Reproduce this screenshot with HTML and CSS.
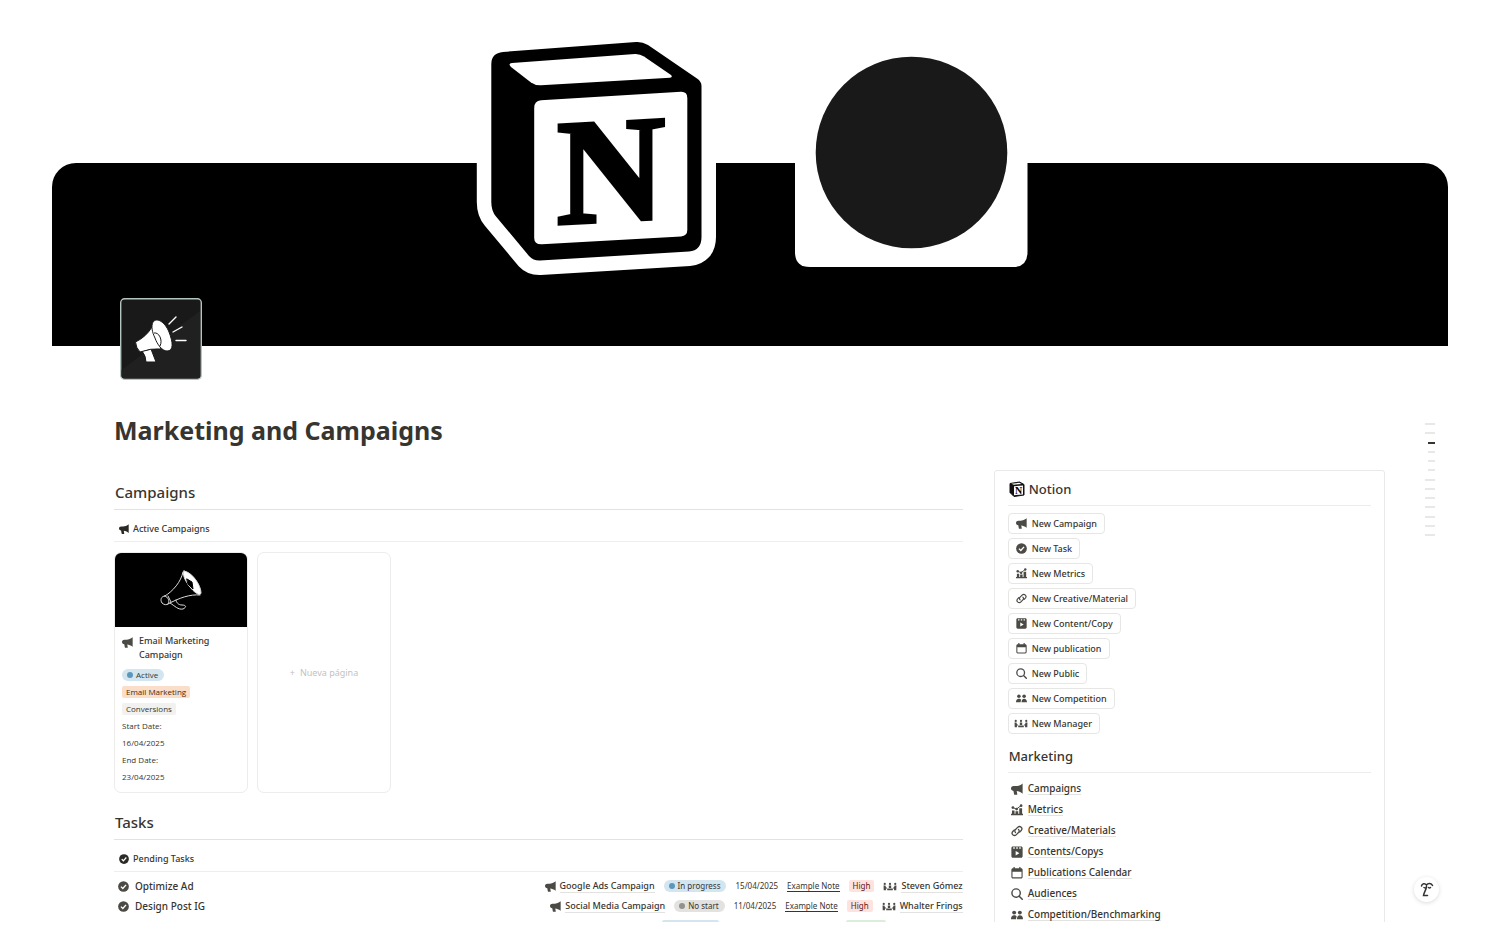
FILE: index.html
```html
<!DOCTYPE html>
<html lang="en">
<head>
    <meta charset="UTF-8">
    <meta name="viewport" content="width=device-width, initial-scale=1.0">
    <title>Marketing and Campaigns</title>
    <link rel="stylesheet" href="styles.css">
</head>
<body>
    <!-- Shared icons -->
    <svg class="icon-defs" aria-hidden="true">
        <symbol id="i-horn" viewBox="0 0 16 16">
            <path d="M15.500.5v13.700C12.600 12 10 11 7.600 10.800l.8 4.200c0 .5-.2.8-.7.8H5c-.5 0-.7-.2-.8-.6l-.9-4.700C1.200 10 0 9 0 7.200c0-1.800 1.200-3.200 3.500-3.200h3C9.600 3.900 12.600 2.900 15.500.5z"/>
        </symbol>
        <symbol id="i-check" viewBox="0 0 16 16">
            <circle cx="8" cy="8" r="7.800"/>
            <path d="M4.300 8.200l2.700 2.700 4.700-5.300" fill="none" stroke="#fff" stroke-width="2"/>
        </symbol>
        <symbol id="i-metrics" viewBox="0 0 16 16">
            <path d="M0 13h16v2H0zM1.300 8.500h3.400v5H1.300zM6 9.500h3.600V13.500H6zM11 5.500h3.800v8H11z"/>
            <path d="M2.500 4.800l4.800 2L13.500 2" fill="none" stroke="currentColor" stroke-width="1.300"/>
            <circle cx="2.500" cy="4.800" r="1.800"/><circle cx="7.500" cy="6.800" r="1.800"/><circle cx="13.500" cy="2.200" r="1.800"/>
        </symbol>
        <symbol id="i-link" viewBox="0 0 16 16">
            <g fill="none" stroke="currentColor" stroke-width="1.700" stroke-linecap="round">
                <path d="M6 10c-1.300-1.200-1.200-2.700 0-3.900l2.800-2.900c1.300-1.300 3.500-1.400 4.800-.2 1.300 1.300 1.200 3.100 0 4.400l-2 2"/>
                <path d="M10 6c1.300 1.200 1.200 2.700 0 3.900l-2.800 2.900c-1.300 1.300-3.500 1.400-4.800.2-1.300-1.300-1.200-3.100 0-4.400l2-2"/>
            </g>
        </symbol>
        <symbol id="i-video" viewBox="0 0 16 16">
            <path d="M.5 2.500c0-1.200.8-2 2-2h11c1.200 0 2 .8 2 2v11c0 1.200-.8 2-2 2h-11c-1.200 0-2-.8-2-2z"/>
            <path d="M3 1.800h2v2H3zM7 1.800h2v2H7zM11 1.800h2v2h-2zM6.200 6.500l5 3-5 3z" fill="#fff"/>
        </symbol>
        <symbol id="i-calendar" viewBox="0 0 16 16">
            <path d="M3.300 0H5v1.700h6V0h1.700v1.700h.8c1.100 0 2 .8 2 2v9.500c0 1.100-.9 2-2 2h-11c-1.100 0-2-.9-2-2V3.700c0-1.200.9-2 2-2h.8zM2 6.300v6.600c0 .5.300.8.8.8h10.400c.5 0 .8-.3.8-.8V6.300z" fill-rule="evenodd"/>
        </symbol>
        <symbol id="i-search" viewBox="0 0 16 16">
            <circle cx="6.800" cy="6.800" r="5.600" fill="none" stroke="currentColor" stroke-width="1.900"/>
            <path d="M11 11l4 4" stroke="currentColor" stroke-width="2" stroke-linecap="round"/>
        </symbol>
        <symbol id="i-people" viewBox="0 0 16 16">
            <circle cx="4.200" cy="4.800" r="2.600"/><circle cx="11.800" cy="4.800" r="2.600"/>
            <path d="M0 13.500c0-3.200 1.600-5.300 4.200-5.300 1.600 0 2.700.6 3.400 1.700C7 10.800 6.800 12 6.800 13.500zM8 13.500c0-3.200 1.400-5.300 3.800-5.300C14.400 8.200 16 10.300 16 13.500z"/>
        </symbol>
        <symbol id="i-team" viewBox="0 0 20 14">
            <circle cx="2.500" cy="3.300" r="1.600"/><circle cx="10" cy="3.300" r="1.600"/><circle cx="17.500" cy="3.300" r="1.600"/>
            <path d="M.8 5.600h2.700l.8 3h1.400V10H4.200v2.500H1zM19.200 5.600h-2.700l-.8 3h-1.400V10h1.500v2.500H19zM8.300 5.600h3.400v3.700H8.300zM6 10h8v2.500H6z"/>
        </symbol>
    </svg>

    <div class="page">
        <header class="cover">
            <svg class="cover-art" viewBox="476 27 552 250" role="img" aria-label="Notion logo">
                <!-- Cube -->
                <path d="M491.300 64Q491.300 53 503 52L636 42Q642 41.500 648 45L697 78.500Q701.500 81.500 701.500 86V237Q701.500 250.500 689 251.500L540 260.500Q533.500 260.800 529 256L496 216.500Q491.300 211 491.300 202Z" stroke="#fff" stroke-width="29" stroke-linejoin="round" fill="#fff"/>
                <path d="M491.300 64Q491.300 53 503 52L636 42Q642 41.500 648 45L697 78.500Q701.500 81.500 701.500 86V237Q701.500 250.500 689 251.500L540 260.500Q533.500 260.800 529 256L496 216.500Q491.300 211 491.300 202Z"/>
                <path d="M511 67Q507.500 63.500 512 63L635 54Q640 53.800 644 56.500L671 75Q673 77.300 670 77.700L541 85.300Q535 85.500 531 82.500Z" fill="#fff"/>
                <path d="M534.200 108Q534.200 100.800 541 100.300L681 91.700Q687.300 91.500 687.300 98V230Q687.300 236 681 236.400L542 244.300Q534.200 244.600 534.200 238Z" fill="#fff"/>
                <g transform="translate(611 221) skewY(-3)">
                    <text class="cube-letter" text-anchor="middle">N</text>
                </g>
                <!-- Badge -->
                <path d="M795 130H1027.500V252Q1027.500 267 1013 267H810Q795 267 795 252Z" fill="#fff"/>
                <circle cx="911.500" cy="152.500" r="95.800" fill="#191919"/>
            </svg>
            <svg class="page-icon" viewBox="0 0 82 82" role="img" aria-label="Megaphone">
                <rect x=".7" y=".7" width="80.600" height="80.600" rx="4" fill="#191919" stroke="#b4c4bf" stroke-width="1.400"/>
                <path d="M1.500 72L80 13V77.500Q80 80.500 77 80.500H4.500Q1.500 80.500 1.500 77.500Z" fill="#202020"/>
                <g fill="#fff" stroke="#191919">
                    <path d="M22 53L31 51L36 64L26 64Q26 58 22 53Z"/>
                    <path d="M15.500 44Q26 39 32 29L41 51Q31 50 20 54Q16 50 15.500 44Z"/>
                    <path d="M33 24C37 19 45 24 49 34C53 44 54 53 47 53C42 53 37 46 35 40C32 34 31 28 33 24Z"/>
                    <path d="M34 35C39 34 43 42 40 48" fill="none"/>
                </g>
                <path d="M49 26l7-7M53 34l9-5M56 42.500h10" stroke="#fff" stroke-width="1.400" stroke-linecap="round"/>
            </svg>
        </header>

        <h1 class="page-title">Marketing and Campaigns</h1>

        <div class="columns">
            <main class="main-col">
                <section class="campaigns">
                    <h2 class="section-title">Campaigns</h2>
                    <div class="view-tab"><svg class="icon"><use href="#i-horn"/></svg>Active Campaigns</div>
                    <div class="gallery">
                        <article class="card">
                            <div class="card-cover">
                                <svg class="card-art" viewBox="0 0 44 42" fill="none" stroke="#ddd" stroke-linecap="round">
                                    <path d="M24 3C22 13 14 22 6 27M41 26C31 25 20 29 9 35"/>
                                    <path d="M6 27C2 27 1 31 3 34C5 36 8 36 9 35C11 32 9 28 6 27ZM9 27L12 33"/>
                                    <path d="M25 2C33 3 42 16 42 24C41 28 35 23 31 18C26 12 23 5 25 2Z" fill="#fff"/>
                                    <path d="M28 10L33 13L34 20L29 15Z" fill="#000" stroke="#000"/>
                                    <path d="M11 34C16 37 19 41 24 40C28 38 27 36 23 36C19 36 17 33 17 31"/>
                                </svg>
                            </div>
                            <div class="card-body">
                                <h3 class="card-title"><svg class="icon"><use href="#i-horn"/></svg>Email Marketing Campaign</h3>
                                <div class="prop"><span class="status status-blue">Active</span></div>
                                <div class="prop"><span class="tag tag-orange">Email Marketing</span></div>
                                <div class="prop"><span class="tag tag-gray">Conversions</span></div>
                                <div class="prop">Start Date:</div>
                                <div class="prop prop-date">16/04/2025</div>
                                <div class="prop">End Date:</div>
                                <div class="prop prop-date">23/04/2025</div>
                            </div>
                        </article>
                        <button class="card card-new" type="button"><span class="plus">+</span>Nueva página</button>
                    </div>
                </section>

                <section class="tasks">
                    <h2 class="section-title">Tasks</h2>
                    <div class="view-tab"><svg class="icon"><use href="#i-check"/></svg>Pending Tasks</div>
                    <ul class="task-list">
                        <li class="task">
                            <span class="task-name"><svg class="icon"><use href="#i-check"/></svg>Optimize Ad</span>
                            <a class="relation" href="#"><svg class="icon"><use href="#i-horn"/></svg><span class="ref">Google Ads Campaign</span></a>
                            <span class="status status-blue">In progress</span>
                            <span class="task-date">15/04/2025</span>
                            <a class="note" href="#">Example Note</a>
                            <span class="tag tag-red">High</span>
                            <a class="relation" href="#"><svg class="icon icon-wide"><use href="#i-team"/></svg><span class="ref">Steven Gómez</span></a>
                        </li>
                        <li class="task">
                            <span class="task-name"><svg class="icon"><use href="#i-check"/></svg>Design Post IG</span>
                            <a class="relation" href="#"><svg class="icon"><use href="#i-horn"/></svg><span class="ref">Social Media Campaign</span></a>
                            <span class="status status-gray">No start</span>
                            <span class="task-date">11/04/2025</span>
                            <a class="note" href="#">Example Note</a>
                            <span class="tag tag-red">High</span>
                            <a class="relation" href="#"><svg class="icon icon-wide"><use href="#i-team"/></svg><span class="ref">Whalter Frings</span></a>
                        </li>
                        <!-- Next row, cut by the page edge -->
                        <li class="task task-cut">
                            <span class="pill-edge pill-blue"></span>
                            <span class="pill-edge pill-green"></span>
                        </li>
                    </ul>
                </section>
            </main>

            <aside class="side-col">
                <h2 class="side-title">
                    <svg class="notion-icon" viewBox="0 0 16 16">
                        <path d="M1 2.500L10.500 1L15 3.500V14L5 15.500L1 11.500Z" fill="#111" stroke="#111" stroke-linejoin="round"/>
                        <path d="M2.500 2.700L10.200 1.800L12.500 3L4.800 3.700ZM5 5.200L14 4.500V13.400L5 14.200Z" fill="#fff"/>
                        <text class="notion-letter" x="6" y="13">N</text>
                    </svg>
                    Notion
                </h2>
                <div class="actions">
                    <button class="action" type="button"><svg class="icon"><use href="#i-horn"/></svg>New Campaign</button>
                    <button class="action" type="button"><svg class="icon"><use href="#i-check"/></svg>New Task</button>
                    <button class="action" type="button"><svg class="icon"><use href="#i-metrics"/></svg>New Metrics</button>
                    <button class="action" type="button"><svg class="icon"><use href="#i-link"/></svg>New Creative/Material</button>
                    <button class="action" type="button"><svg class="icon"><use href="#i-video"/></svg>New Content/Copy</button>
                    <button class="action" type="button"><svg class="icon"><use href="#i-calendar"/></svg>New publication</button>
                    <button class="action" type="button"><svg class="icon"><use href="#i-search"/></svg>New Public</button>
                    <button class="action" type="button"><svg class="icon"><use href="#i-people"/></svg>New Competition</button>
                    <button class="action action-wide" type="button"><svg class="icon icon-wide"><use href="#i-team"/></svg>New Manager</button>
                </div>
                <h2 class="side-title">Marketing</h2>
                <nav class="links">
                    <a class="link" href="#"><svg class="icon"><use href="#i-horn"/></svg><span class="ref">Campaigns</span></a>
                    <a class="link" href="#"><svg class="icon"><use href="#i-metrics"/></svg><span class="ref">Metrics</span></a>
                    <a class="link" href="#"><svg class="icon"><use href="#i-link"/></svg><span class="ref">Creative/Materials</span></a>
                    <a class="link" href="#"><svg class="icon"><use href="#i-video"/></svg><span class="ref">Contents/Copys</span></a>
                    <a class="link" href="#"><svg class="icon"><use href="#i-calendar"/></svg><span class="ref">Publications Calendar</span></a>
                    <a class="link" href="#"><svg class="icon"><use href="#i-search"/></svg><span class="ref">Audiences</span></a>
                    <a class="link" href="#"><svg class="icon"><use href="#i-people"/></svg><span class="ref">Competition/Benchmarking</span></a>
                </nav>
            </aside>
        </div>

        <!-- Table of contents marks -->
        <div class="toc">
            <i></i><i></i><i class="sub current"></i><i class="sub"></i><i class="sub"></i><i class="sub"></i>
            <i></i><i></i><i></i><i></i><i></i><i></i><i></i>
        </div>

        <button class="ai-btn" type="button" aria-label="Assistant">
            <svg viewBox="0 0 14 16" fill="none" stroke="#333" stroke-width="1.500" stroke-linecap="round">
                <path d="M1.500 4C2 1.500 5 1 6.500 3C8 1 11.500 1 12.500 3.500M4 5.500Q5.500 6.500 6.500 5.500M8.500 5.500Q9.500 6.500 10.500 5.500M6.500 4C6.500 8 4 10 3.500 13.500H7.500"/>
            </svg>
        </button>
    </div>
</body>
</html>
```
FILE: styles.css
```css
* {
    box-sizing: border-box;
}
body {
    margin: 0;
    background: #fff;
    color: #37352f;
    font-family: "Noto Sans", "Open Sans", sans-serif;
    font-size: 9px;
    line-height: 16px;
}
a {
    color: inherit;
    text-decoration: none;
}
button {
    font: inherit;
    color: inherit;
    background: #fff;
    cursor: pointer;
}
h1, h2, h3, ul {
    margin: 0;
    padding: 0;
}
.icon-defs {
    display: none;
}
.icon {
    width: 11px;
    height: 11px;
    flex: none;
    color: #4b4a45;
    fill: currentColor;
}
.icon-wide {
    width: 14px;
}

/* Page frame */
.page {
    position: relative;
    height: calc(100vh - 15px);
    padding: 163px 52px 0;
    overflow: hidden;
}
.cover {
    position: relative;
    height: 183px;
    background: #000;
    border-radius: 24px 24px 0 0;
}
.cover-art {
    position: absolute;
    left: 424px;
    bottom: 69px;
    width: 552px;
    height: 250px;
}
.cube-letter {
    font-family: "Liberation Serif", serif;
    font-weight: bold;
    font-size: 150px;
    stroke: #000;
    stroke-width: 4px;
}
.page-icon {
    position: absolute;
    left: 68px;
    bottom: -34px;
    width: 82px;
    height: 82px;
}
.page-title {
    margin: 64px 62px 0;
    font-size: 25px;
    line-height: 40px;
    font-weight: 700;
}
.columns {
    display: grid;
    grid-template-columns: 848fr 391fr;
    gap: 31px;
    margin: 20px 63px 0 62px;
    align-items: start;
}

/* Main column */
.section-title {
    padding: 11px 0 6px 1px;
    border-bottom: 1px solid #e3e2e0;
    font-size: 15px;
    line-height: 22px;
    font-weight: 500;
}
.view-tab {
    display: flex;
    align-items: center;
    gap: 4px;
    height: 32px;
    padding: 6px 5px 0;
    border-bottom: 1px solid #eeeeed;
    font-weight: 500;
}
.view-tab .icon {
    width: 10px;
    height: 10px;
    color: #2b2a26;
}
.gallery {
    display: flex;
    gap: 9px;
    margin-top: 10px;
}
.card {
    width: 134px;
    min-height: 241px;
    border: 1px solid #ececeb;
    border-radius: 7px;
    overflow: hidden;
}
.card-cover {
    display: flex;
    align-items: center;
    justify-content: center;
    height: 74px;
    background: #000;
}
.card-art {
    width: 44px;
    height: 42px;
}
.card-body {
    padding: 7px;
}
.card-title {
    display: flex;
    gap: 6px;
    margin-bottom: 4px;
    font-size: 9px;
    line-height: 14px;
    font-weight: 500;
}
.card-title .icon {
    margin-top: 3px;
}
.prop {
    display: flex;
    align-items: center;
    height: 17px;
    font-family: "Open Sans", sans-serif;
    font-size: 8px;
}
.card-new {
    color: #c3c2bf;
}
.plus {
    margin-right: 5px;
}
.status, .tag {
    display: inline-block;
    padding: 0 4px;
    border-radius: 2px;
    font-size: 8px;
    line-height: 12px;
}
.status {
    padding: 0 6px 0 5px;
    border-radius: 6px;
}
.status::before {
    content: "";
    display: inline-block;
    width: 6px;
    height: 6px;
    margin-right: 3px;
    border-radius: 50%;
    background: #5b97bd;
}
.status-blue {
    background: #d3e5ef;
}
.status-gray {
    background: #e3e2e0;
}
.status-gray::before {
    background: #91918e;
}
.tag-orange {
    background: #fadec9;
    color: #49290e;
}
.tag-gray {
    background: #f1f1ef;
}
.tag-red {
    background: #ffe2dd;
    color: #5d1715;
}
.tasks .section-title {
    padding-top: 18px;
}
.task-list {
    padding-top: 4px;
    list-style: none;
}
.task {
    display: flex;
    align-items: center;
    gap: 9px;
    height: 20px;
}
.task-name {
    display: flex;
    align-items: center;
    gap: 6px;
    flex: 1;
    padding-left: 4px;
    font-size: 10px;
    font-weight: 500;
}
.relation, .link {
    display: flex;
    align-items: center;
    gap: 4px;
    font-weight: 500;
}
.ref {
    line-height: 12px;
    border-bottom: 1px solid #e3e2e0;
}
.task-date, .note {
    font-size: 8px;
}
.note {
    line-height: 11px;
    border-bottom: 1px solid #37352f;
}
.task-cut {
    justify-content: flex-end;
    gap: 127px;
    padding-right: 77px;
}
.pill-edge {
    height: 12px;
    border-radius: 2px;
}
.pill-blue {
    width: 57px;
    background: #d3e5ef;
}
.pill-green {
    width: 40px;
    background: #dbeddb;
}

/* Side column */
.side-col {
    height: 600px;
    padding: 7px 13px;
    border: 1px solid #e9e9e7;
    border-radius: 3px;
}
.side-title {
    display: flex;
    align-items: center;
    gap: 4px;
    height: 28px;
    padding: 0 1px 5px;
    border-bottom: 1px solid #ececeb;
    font-size: 13px;
    line-height: 22px;
    font-weight: 500;
}
.notion-icon {
    width: 16px;
    height: 16px;
}
.notion-letter {
    font-family: "Liberation Serif", serif;
    font-weight: bold;
    font-size: 10px;
}
.actions {
    display: flex;
    flex-direction: column;
    align-items: flex-start;
    gap: 4px;
    padding: 7px 0 11px;
}
.action {
    display: flex;
    align-items: center;
    gap: 5px;
    height: 21px;
    padding: 0 7px;
    border: 1px solid #e6e6e4;
    border-radius: 4px;
    font-weight: 500;
}
.action-wide {
    padding-left: 5px;
    gap: 4px;
}
.links {
    padding: 5px 3px;
}
.link {
    gap: 5px;
    height: 21px;
    font-size: 10px;
}
.link .icon {
    width: 12px;
    height: 12px;
}

/* Floating parts */
.toc {
    position: absolute;
    top: 423px;
    right: 65px;
    display: flex;
    flex-direction: column;
    align-items: flex-end;
    justify-content: space-between;
    height: 113px;
}
.toc i {
    width: 10px;
    height: 2px;
    background: #e8e8e7;
}
.toc .sub {
    width: 7px;
}
.toc .current {
    background: #37352f;
}
.ai-btn {
    position: absolute;
    right: 61px;
    bottom: 20px;
    display: flex;
    align-items: center;
    justify-content: center;
    width: 25px;
    height: 25px;
    padding: 0;
    border: 0;
    border-radius: 50%;
    box-shadow: 0 1px 4px rgba(0, 0, 0, 0.15);
}
.ai-btn svg {
    width: 14px;
    height: 16px;
}
```
